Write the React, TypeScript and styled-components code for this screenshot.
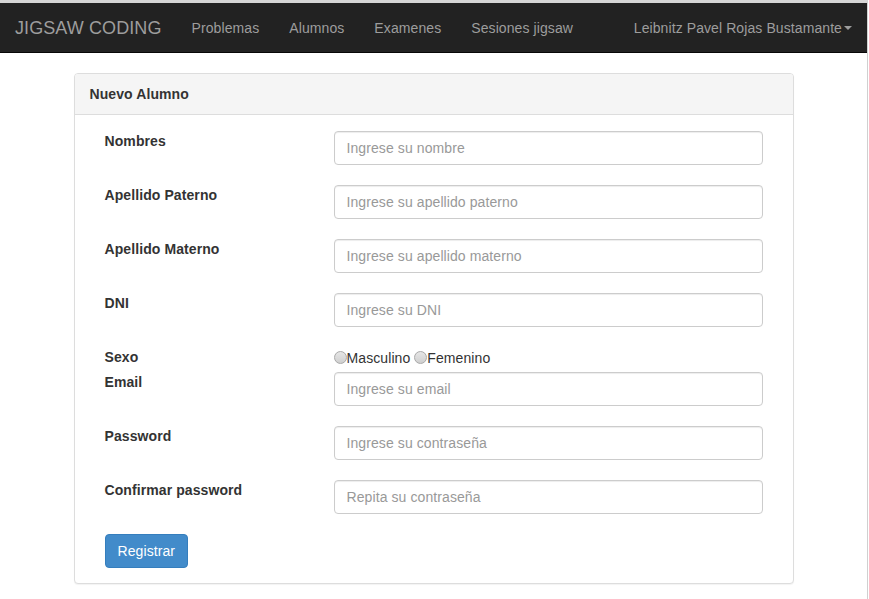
import React from "react";
import styled, { createGlobalStyle } from "styled-components";

const GlobalStyle = createGlobalStyle`
  html, body {
    margin: 0;
    padding: 0;
    background: #fff;
  }
  body {
    font-family: "Liberation Sans", Arial, Helvetica, sans-serif;
    font-size: 14px;
    line-height: 20px;
    letter-spacing: 0.09px;
    color: #333;
  }
  * {
    box-sizing: border-box;
  }
`;

const StyledPage = styled.div`
  width: 868px;
  min-height: 599px;
  border-top: 3px solid #d6d6d6;
  border-right: 1px solid #d0d0d0;
`;

const StyledNavbar = styled.nav`
  display: flex;
  align-items: center;
  height: 50px;
  background-color: #222;
  border-bottom: 1px solid #080808;
`;

const StyledBrand = styled.a`
  padding: 0 15px;
  font-size: 18px;
  line-height: 50px;
  color: #9d9d9d;
  text-decoration: none;
`;

const StyledNavList = styled.ul`
  display: flex;
  margin: 0;
  padding: 0;
  list-style: none;
`;

const StyledNavRight = styled(StyledNavList)`
  margin-left: auto;
  margin-right: 0;
`;

const StyledNavLink = styled.a`
  display: flex;
  align-items: center;
  padding: 0 15px;
  line-height: 50px;
  color: #9d9d9d;
  text-decoration: none;
`;

const StyledCaret = styled.span`
  display: inline-block;
  width: 0;
  height: 0;
  margin-left: 2px;
  border-top: 4px solid #9d9d9d;
  border-left: 4px solid transparent;
  border-right: 4px solid transparent;
`;

const StyledContainer = styled.div`
  width: 750px;
  margin: 20px auto 0;
  padding: 0 15px;
`;

const StyledPanel = styled.div`
  border: 1px solid #ddd;
  border-radius: 4px;
  background: #fff;
  box-shadow: 0 1px 1px rgba(0, 0, 0, 0.05);
`;

const StyledPanelHeading = styled.div`
  padding: 10px 15px;
  background-color: #f5f5f5;
  border-bottom: 1px solid #ddd;
  border-radius: 3px 3px 0 0;
  font-weight: bold;
  color: #333;
`;

const StyledPanelBody = styled.form`
  display: flex;
  flex-direction: column;
  padding: 16px 30px 15px;
`;

const StyledFormRow = styled.div<{ $compact?: boolean }>`
  display: grid;
  grid-template-columns: 229px 1fr;
  align-items: start;
  margin-bottom: ${(p) => (p.$compact ? "4px" : "20px")};
`;

const StyledLabel = styled.label`
  font-weight: bold;
  line-height: 20px;
  color: #333;
`;

const StyledInput = styled.input`
  height: 34px;
  width: 100%;
  padding: 6px 12px;
  font-family: inherit;
  font-size: 14px;
  letter-spacing: inherit;
  color: #555;
  border: 1px solid #ccc;
  border-radius: 4px;
  box-shadow: inset 0 1px 1px rgba(0, 0, 0, 0.075);
  outline: none;

  &::placeholder {
    color: #999;
  }
`;

const StyledRadioGroup = styled.div`
  display: flex;
  align-items: center;
  height: 20px;
  margin-top: 1px;
`;

const StyledRadioLabel = styled.label`
  display: flex;
  align-items: center;
  margin-right: 4px;
  color: #333;
`;

const StyledRadioDot = styled.span`
  display: inline-block;
  width: 13px;
  height: 13px;
  margin-top: -1px;
  border: 1px solid #a9a9a9;
  border-radius: 50%;
  background: linear-gradient(#e6e6e6, #cfcfcf);
`;

const StyledButton = styled.button`
  align-self: flex-start;
  height: 34px;
  padding: 6px 12px;
  font-family: inherit;
  font-size: 14px;
  letter-spacing: inherit;
  color: #fff;
  background-color: #428bca;
  border: 1px solid #357ebd;
  border-radius: 4px;
  cursor: pointer;
`;

const fields = [
  { label: "Nombres", placeholder: "Ingrese su nombre" },
  { label: "Apellido Paterno", placeholder: "Ingrese su apellido paterno" },
  { label: "Apellido Materno", placeholder: "Ingrese su apellido materno" },
  { label: "DNI", placeholder: "Ingrese su DNI" },
];

const accountFields = [
  { label: "Email", placeholder: "Ingrese su email" },
  { label: "Password", placeholder: "Ingrese su contraseña" },
  { label: "Confirmar password", placeholder: "Repita su contraseña" },
];

const App: React.FC = () => {
  return (
    <>
      <GlobalStyle />
      <StyledPage>
        <StyledNavbar>
          <StyledBrand href="#">JIGSAW CODING</StyledBrand>
          <StyledNavList>
            {["Problemas", "Alumnos", "Examenes", "Sesiones jigsaw"].map((item) => (
              <li key={item}>
                <StyledNavLink href="#">{item}</StyledNavLink>
              </li>
            ))}
          </StyledNavList>
          <StyledNavRight>
            <li>
              <StyledNavLink href="#">
                Leibnitz Pavel Rojas Bustamante
                <StyledCaret />
              </StyledNavLink>
            </li>
          </StyledNavRight>
        </StyledNavbar>

        <StyledContainer>
          <StyledPanel>
            <StyledPanelHeading>Nuevo Alumno</StyledPanelHeading>
            <StyledPanelBody onSubmit={(e) => e.preventDefault()}>
              {fields.map((f) => (
                <StyledFormRow key={f.label}>
                  <StyledLabel>{f.label}</StyledLabel>
                  <StyledInput placeholder={f.placeholder} />
                </StyledFormRow>
              ))}

              <StyledFormRow $compact>
                <StyledLabel>Sexo</StyledLabel>
                <StyledRadioGroup>
                  <StyledRadioLabel>
                    <StyledRadioDot />
                    Masculino
                  </StyledRadioLabel>
                  <StyledRadioLabel>
                    <StyledRadioDot />
                    Femenino
                  </StyledRadioLabel>
                </StyledRadioGroup>
              </StyledFormRow>

              {accountFields.map((f) => (
                <StyledFormRow key={f.label}>
                  <StyledLabel>{f.label}</StyledLabel>
                  <StyledInput
                    type={f.label === "Email" ? "email" : "text"}
                    placeholder={f.placeholder}
                  />
                </StyledFormRow>
              ))}

              <StyledButton type="submit">Registrar</StyledButton>
            </StyledPanelBody>
          </StyledPanel>
        </StyledContainer>
      </StyledPage>
    </>
  );
};

export default App;
